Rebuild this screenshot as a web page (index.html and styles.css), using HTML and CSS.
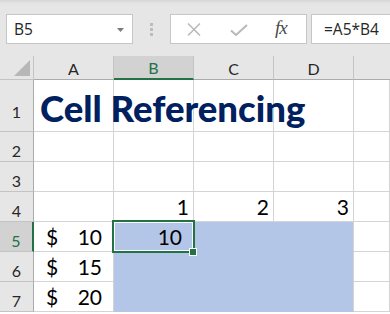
FILE: index.html
```html
<!DOCTYPE html>
<html>
<head>
<meta charset="utf-8">
<link rel="stylesheet" href="styles.css">
</head>
<body>
<div class="app">
  <div class="toolbar">
    <div class="namebox">
      <span class="name">B5</span>
      <svg class="drop" width="7" height="4" viewBox="0 0 7 4"><path d="M0 0H7L3.5 4Z" fill="#7a7a7a"/></svg>
    </div>
    <div class="grip"><i></i><i></i><i></i></div>
    <div class="fxbox">
      <svg class="ico" width="14" height="13" viewBox="0 0 14 13"><path d="M1 0.5L13 12.5M13 0.5L1 12.5" stroke="#b9b9b9" stroke-width="1.5" fill="none"/></svg>
      <svg class="ico" width="18" height="12" viewBox="0 0 18 12"><path d="M1 6.5L6 11L17 1" stroke="#b9b9b9" stroke-width="2" fill="none"/></svg>
      <span class="fx">fx</span>
    </div>
    <div class="formula">=A5*B4</div>
  </div>
  <div class="grid">
    <div class="corner"><svg width="16" height="16" viewBox="0 0 16 16"><path d="M16 0V16H0Z" fill="#b7b7b7"/></svg></div>
    <div class="ch">A</div>
    <div class="ch on">B</div>
    <div class="ch">C</div>
    <div class="ch">D</div>
    <div class="ch last"></div>

    <div class="rh r1">1</div>
    <div class="c title-cell"><span class="title">Cell Referencing</span></div>
    <div class="c"></div>
    <div class="c"></div>
    <div class="c"></div>
    <div class="c"></div>

    <div class="rh">2</div>
    <div class="c"></div><div class="c"></div><div class="c"></div><div class="c"></div><div class="c"></div>

    <div class="rh">3</div>
    <div class="c"></div><div class="c"></div><div class="c"></div><div class="c"></div><div class="c"></div>

    <div class="rh">4</div>
    <div class="c"></div>
    <div class="c num">1</div>
    <div class="c num">2</div>
    <div class="c num">3</div>
    <div class="c"></div>

    <div class="rh on">5</div>
    <div class="c acc"><span>$</span><span>10</span></div>
    <div class="c sel active num2">10</div>
    <div class="c sel"></div>
    <div class="c sel edge"></div>
    <div class="c"></div>

    <div class="rh">6</div>
    <div class="c acc"><span>$</span><span>15</span></div>
    <div class="c sel"></div>
    <div class="c sel"></div>
    <div class="c sel edge"></div>
    <div class="c"></div>

    <div class="rh">7</div>
    <div class="c acc"><span>$</span><span>20</span></div>
    <div class="c sel"></div>
    <div class="c sel"></div>
    <div class="c sel edge"></div>
    <div class="c"></div>
  </div>
</div>
</body>
</html>
```

FILE: styles.css
```css
html, body {
  margin: 0;
  padding: 0;
  background: #ffffff;
}
.app {
  width: 390px;
  height: 314px;
  overflow: hidden;
  font-family: Lato, "Liberation Sans", sans-serif;
}
.toolbar {
  height: 56px;
  box-sizing: border-box;
  background: linear-gradient(#d6d6d6 0px, #e3e3e3 3px, #e6e6e6 6px);
  display: flex;
  align-items: flex-start;
  padding-top: 14px;
  padding-left: 6px;
}
.namebox {
  width: 127px;
  height: 30px;
  box-sizing: border-box;
  background: #fff;
  border: 1px solid #c6c6c6;
  display: flex;
  align-items: center;
  justify-content: space-between;
  padding: 0 8px 0 7px;
}
.name {
  font-family: "Open Sans", sans-serif;
  font-size: 15.5px;
  color: #262626;
}
.drop {
  margin-top: 1px;
}
.grip {
  width: 37px;
  height: 30px;
  display: flex;
  flex-direction: column;
  align-items: center;
  justify-content: center;
  gap: 2px;
}
.grip i {
  display: block;
  width: 3px;
  height: 3px;
  background: #bcbcbc;
}
.fxbox {
  width: 137px;
  height: 30px;
  box-sizing: border-box;
  background: #fff;
  border: 1px solid #c6c6c6;
  display: flex;
  align-items: center;
  padding-left: 16px;
}
.fxbox .ico:nth-child(1) {
  margin-right: 29px;
}
.fxbox .ico:nth-child(2) {
  margin-right: 27px;
  margin-top: 1px;
}
.fx {
  font-family: "Liberation Serif", serif;
  font-style: italic;
  font-size: 19px;
  color: #4a4a4a;
  letter-spacing: -1px;
  margin-top: -2px;
}
.formula {
  margin-left: 4px;
  flex: 1;
  height: 30px;
  box-sizing: border-box;
  background: #fff;
  border: 1px solid #c6c6c6;
  border-right: none;
  padding-left: 12px;
  font-family: "Open Sans", sans-serif;
  font-size: 15.5px;
  line-height: 28px;
  color: #262626;
}
.grid {
  display: grid;
  grid-template-columns: 34px 80px 80px 80px 80px 1fr;
  grid-template-rows: 24px 52px 30px 30px 30px 30px 30px 30px;
}
.corner, .ch, .rh {
  background: #e6e6e6;
  box-sizing: border-box;
  color: #262626;
  font-size: 16px;
}
.corner {
  border-right: 1px solid #c4c4c4;
  border-bottom: 1px solid #c4c4c4;
  display: flex;
  align-items: flex-end;
  justify-content: flex-end;
  padding: 0 3px 3px 0;
}
.ch {
  border-right: 1px solid #c4c4c4;
  border-bottom: 1px solid #ababab;
  display: flex;
  align-items: center;
  justify-content: center;
  padding-top: 1px;
}
.ch.on {
  background: #d2d2d2;
  color: #217346;
  border-bottom: 2px solid #217346;
}
.ch.last {
  border-right: none;
}
.rh {
  border-right: 1px solid #ababab;
  border-bottom: 1px solid #c4c4c4;
  display: flex;
  align-items: center;
  justify-content: center;
  padding-top: 7px;
}
.rh.r1 {
  padding-top: 12px;
}
.rh.on {
  background: #d2d2d2;
  color: #217346;
  border-right: 2px solid #217346;
}
.c {
  box-sizing: border-box;
  border-right: 1px solid #d4d4d4;
  border-bottom: 1px solid #d4d4d4;
  font-size: 21px;
  color: #000;
  display: flex;
  align-items: flex-end;
  line-height: 1;
  padding-bottom: 4px;
}
.title-cell {
  overflow: visible;
  position: relative;
  z-index: 1;
  padding-left: 6px;
  padding-bottom: 5px;
  white-space: nowrap;
}
.title {
  font-weight: 900;
  font-size: 36.5px;
  color: #002060;
}
.num {
  justify-content: flex-end;
  padding-right: 4px;
}
.num2 {
  justify-content: flex-end;
  padding-right: 11px;
}
.acc {
  justify-content: space-between;
  padding-left: 12px;
  padding-right: 11px;
}
.sel {
  background: #b4c6e7;
  border-right-color: #b4c6e7;
  border-bottom-color: #b4c6e7;
}
.sel.edge {
  border-right-color: #d4d4d4;
}
.active {
  position: relative;
}
.active::before {
  content: "";
  position: absolute;
  left: -2px;
  top: -2px;
  width: 83px;
  height: 33px;
  box-sizing: border-box;
  border: 2px solid #217346;
  box-shadow: inset 0 0 0 1px #ffffff;
}
.active::after {
  content: "";
  position: absolute;
  left: 75px;
  top: 26px;
  width: 6px;
  height: 6px;
  background: #217346;
  border: 1px solid #ffffff;
}
```
